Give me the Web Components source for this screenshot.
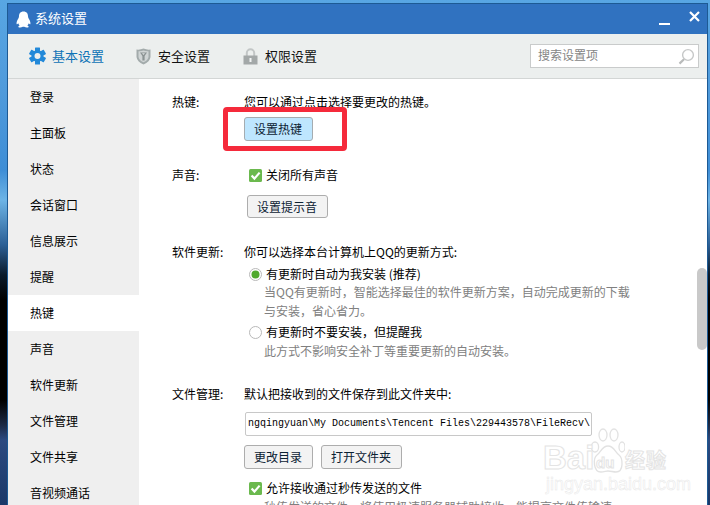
<!DOCTYPE html>
<html lang="zh">
<head>
<meta charset="utf-8">
<title>系统设置</title>
<style>
  html, body { margin: 0; height: 100%; overflow: hidden; }
  body { font: 12px/18px "Noto Sans CJK SC", "Liberation Sans", sans-serif; color: #000; }
</style>
</head>
<body>
<qq-desktop>
  <qq-window>
    <qq-titlebar slot="title">系统设置</qq-titlebar>
    <qq-toolbar slot="toolbar">
      <qq-tab icon="gear" active>基本设置</qq-tab>
      <qq-tab icon="shield">安全设置</qq-tab>
      <qq-tab icon="lock">权限设置</qq-tab>
      <qq-search slot="search">搜索设置项</qq-search>
    </qq-toolbar>
    <qq-sidebar slot="side">
      <qq-nav>登录</qq-nav>
      <qq-nav>主面板</qq-nav>
      <qq-nav>状态</qq-nav>
      <qq-nav>会话窗口</qq-nav>
      <qq-nav>信息展示</qq-nav>
      <qq-nav>提醒</qq-nav>
      <qq-nav active>热键</qq-nav>
      <qq-nav>声音</qq-nav>
      <qq-nav>软件更新</qq-nav>
      <qq-nav>文件管理</qq-nav>
      <qq-nav>文件共享</qq-nav>
      <qq-nav>音视频通话</qq-nav>
    </qq-sidebar>
    <qq-content slot="main">
      <qq-section label="热键:">
        <div>您可以通过点击选择要更改的热键。</div>
        <qq-button primary style="margin-top:6px">设置热键</qq-button>
      </qq-section>
      <qq-section label="声音:">
        <qq-option type="check" checked>关闭所有声音</qq-option>
        <qq-button style="margin:11px 0 0 3px;height:23px;line-height:21px">设置提示音</qq-button>
      </qq-section>
      <qq-section label="软件更新:">
        <div>你可以选择本台计算机上QQ的更新方式:</div>
        <qq-option type="radio" checked style="margin-top:4px">有更新时自动为我安装 (推荐)</qq-option>
        <qq-note style="margin-top:-1px">当QQ有更新时，智能选择最佳的软件更新方案，自动完成更新的下载<br>与安装，省心省力。</qq-note>
        <qq-option type="radio" style="margin-top:3px">有更新时不要安装，但提醒我</qq-option>
        <qq-note>此方式不影响安全补丁等重要更新的自动安装。</qq-note>
      </qq-section>
      <qq-section label="文件管理:">
        <div>默认把接收到的文件保存到此文件夹中:</div>
        <qq-path style="margin-top:9px">ngqingyuan\My Documents\Tencent Files\229443578\FileRecv\</qq-path>
        <qq-actions style="margin-top:9px">
          <qq-button>更改目录</qq-button>
          <qq-button>打开文件夹</qq-button>
        </qq-actions>
        <qq-option type="check" checked style="margin-top:10px">允许接收通过秒传发送的文件</qq-option>
        <qq-note>秒传发送的文件，将使用极速服务器辅助接收，能提高文件传输速</qq-note>
      </qq-section>
      <qq-highlight></qq-highlight>
      <qq-watermark></qq-watermark>
      <qq-scrollbar></qq-scrollbar>
    </qq-content>
  </qq-window>
</qq-desktop>

<script>
  // small helper, every element below is just a class with a shadow root
  const define = (name, css, html) => {
    class El extends HTMLElement {
      constructor() {
        super();
        this.attachShadow({ mode: "open" });
      }
      connectedCallback() {
        const body = typeof html === "function" ? html(this) : html;
        this.shadowRoot.innerHTML = `<style>${css}</style>${body}`;
      }
    }
    customElements.define(name, El);
  };

  const ICONS = {
    gear: `<svg width="17" height="18" viewBox="0 0 17 18">
      <g fill="#2289d9">
        <rect x="6" y="0.5" width="5" height="17" rx="0.5"/>
        <rect x="6" y="0.5" width="5" height="17" rx="0.5" transform="rotate(60 8.5 9)"/>
        <rect x="6" y="0.5" width="5" height="17" rx="0.5" transform="rotate(120 8.5 9)"/>
      </g>
      <circle cx="8.5" cy="9" r="4.6" fill="none" stroke="#2289d9" stroke-width="2.6"/>
      <circle cx="8.5" cy="9" r="3" fill="#ecefee"/>
    </svg>`,
    shield: `<svg width="15" height="17" viewBox="0 0 15 17">
      <path d="M0.5 1.5 Q4 2 7.5 0.5 Q11 2 14.5 1.5 V9 Q14 13.5 7.5 16.5 Q1 13.5 0.5 9 Z" fill="#a3abab"/>
      <path d="M2.5 3.3 Q5 3.5 7.5 2.6 Q10 3.5 12.5 3.3 V9 Q12 12.3 7.5 14.3 Q3 12.3 2.5 9 Z" fill="#d0d5d5"/>
      <path d="M4 4.5 H11 L8.6 8 V12.6 H6.4 V8 Z" fill="#8b9393"/>
      <path d="M6 5.3 H9 L7.5 7 Z" fill="#dde1e1"/>
    </svg>`,
    lock: `<svg width="15" height="17" viewBox="0 0 15 17">
      <path d="M3.8 8 V5 A3.7 3.7 0 0 1 11.2 5 V8" fill="none" stroke="#c2c6c6" stroke-width="2"/>
      <rect x="0.5" y="7.5" width="14" height="9" fill="#a3a8a8"/>
      <rect x="6.5" y="10" width="2" height="4" fill="#f2f4f4"/>
    </svg>`,
  };

  define("qq-desktop", `
    :host {
      display: block; box-sizing: border-box; width: 710px; height: 505px; overflow: hidden;
      padding: 3px 2px 0 7px;
      background: linear-gradient(#58a6e3 0, #4f9adb 90px, #3f8ed6 170px, #6db4e6 200px, #2c5f95 245px,
        #0a1a2a 275px, #000 300px, #000 400px, #1c2a45 425px, #2c4a80 440px, #1a3868 505px);
    }`, `<slot></slot>`);

  define("qq-window", `
    :host {
      display: grid; grid-template-columns: 131px 1fr; grid-template-rows: 30px 45px 1fr;
      height: 100%; box-sizing: border-box; background: #fff;
      border: solid #1d5a94; border-width: 1px 1px 0 1px;
    }
    ::slotted([slot=title]), ::slotted([slot=toolbar]) { grid-column: 1 / 3; }`,
    `<slot name="title"></slot><slot name="toolbar"></slot><slot name="side"></slot><slot name="main"></slot>`);

  define("qq-titlebar", `
    :host {
      display: flex; align-items: center; gap: 4px; padding: 0 7px 0 8px;
      background: #3072c0; color: #fff; font-size: 13px;
    }
    svg { display: block; flex: none; }
    .name { flex: 1; margin-top: -2px; }
    .btns { display: flex; align-items: flex-start; gap: 19px; height: 18px; }
    .min { width: 11px; height: 2px; background: #fff; margin-top: 13px; }`, `
    <svg width="15" height="17" viewBox="0 0 15 17">
      <path fill="#fff" d="M7.5 0.5 C4.3 0.5 3 2.7 3 5.2 C3 6.2 2.7 6.8 2.2 7.7 C1.1 9.5 0.3 11.2 0.6 13 C0.8 13.8 1.6 13.2 2.2 12.2 C2.5 13.2 3 13.9 3.7 14.5 C2.6 14.9 2.2 15.4 2.4 15.9 C2.8 16.7 5.4 16.7 6.8 15.8 H8.2 C9.6 16.7 12.2 16.7 12.6 15.9 C12.8 15.4 12.4 14.9 11.3 14.5 C12 13.9 12.5 13.2 12.8 12.2 C13.4 13.2 14.2 13.8 14.4 13 C14.7 11.2 13.9 9.5 12.8 7.7 C12.3 6.8 12 6.2 12 5.2 C12 2.7 10.7 0.5 7.5 0.5 Z"/>
    </svg>
    <span class="name"><slot></slot></span>
    <span class="btns">
      <span class="min"></span>
      <svg width="11" height="11" viewBox="0 0 11 11" style="margin-top:1px"><path d="M1 1 L10 10 M10 1 L1 10" stroke="#fff" stroke-width="2.2"/></svg>
    </span>`);

  define("qq-toolbar", `
    :host {
      display: flex; align-items: center; padding: 0 8px 0 21px;
      background: #ecefee; border-bottom: 1px solid #d3d6d5;
    }
    .tabs { display: flex; flex: 1; gap: 26px; }`,
    `<div class="tabs"><slot></slot></div><slot name="search"></slot>`);

  define("qq-tab", `
    :host {
      display: flex; align-items: center; width: 81px; gap: 7px;
      font-size: 13px; color: #111;
    }
    :host([active]) { color: #0d72b6; gap: 6px; width: 81px; }
    svg { display: block; flex: none; }`,
    (el) => `${ICONS[el.getAttribute("icon")]}<span><slot></slot></span>`);

  define("qq-search", `
    :host {
      display: flex; align-items: center; justify-content: space-between; box-sizing: border-box;
      width: 169px; height: 24px; padding: 0 3px 0 7px;
      background: #fff; border: 1px solid #c9cbcb; color: #858585;
    }
    svg { display: block; margin-top: 1px; }
    span { margin-top: -2px; }`, `
    <span><slot></slot></span>
    <svg width="17" height="17" viewBox="0 0 17 17">
      <circle cx="10" cy="7" r="5.4" fill="none" stroke="#c6c8c8" stroke-width="1.4"/>
      <path d="M6 11.2 L1.5 15.6" stroke="#b9bbbb" stroke-width="2.2"/>
    </svg>`);

  define("qq-sidebar", `
    :host { display: block; background: #efefef; overflow: hidden; }`, `<slot></slot>`);

  define("qq-nav", `
    :host { display: block; height: 36px; line-height: 36px; padding-left: 22px; }
    :host([active]) { background: #fff; }`, `<slot></slot>`);

  define("qq-content", `
    :host {
      display: block; position: relative; overflow: hidden; background: #fff;
      padding: 14px 0 0 33px;
    }`, `<slot></slot>`);

  define("qq-section", `
    :host { display: grid; grid-template-columns: 72px 1fr; margin-bottom: 25px; }`,
    (el) => `<div>${el.getAttribute("label")}</div><div><slot></slot></div>`);

  define("qq-button", `
    :host {
      display: inline-block; box-sizing: border-box; height: 24px; line-height: 22px; padding: 0 10px 0 9px;
      background: #f3f3f3; border: 1px solid #adadad; border-radius: 3px; color: #0c2233; vertical-align: top;
    }
    :host([primary]) { background: #bee6fe; border-color: #a5acb0; }`, `<slot></slot>`);

  define("qq-actions", `
    :host { display: flex; gap: 8px; }`, `<slot></slot>`);

  define("qq-option", `
    :host { display: flex; align-items: center; gap: 4px; height: 18px; padding-left: 5px; }
    svg { display: block; flex: none; }`,
    (el) => {
      const on = el.hasAttribute("checked");
      const mark = el.getAttribute("type") === "check"
        ? `<svg width="13" height="13" viewBox="0 0 13 13"><rect width="13" height="13" rx="1.5" fill="#6bb94e"/><path d="M2.6 6.6 L5.4 9.6 L10.6 3.6" fill="none" stroke="#fff" stroke-width="2.2"/></svg>`
        : `<svg width="13" height="13" viewBox="0 0 13 13"><circle cx="6.5" cy="6.5" r="6" fill="#fff" stroke="#b8b8b8"/>${on ? '<circle cx="6.5" cy="6.5" r="4" fill="#4fa92c"/>' : ""}</svg>`;
      return `${mark}<span><slot></slot></span>`;
    });

  define("qq-note", `
    :host { display: block; padding-left: 20px; color: #808080; line-height: 19px; }`, `<slot></slot>`);

  define("qq-path", `
    :host {
      display: block; box-sizing: border-box; width: 347px; height: 24px; margin-left: 1px;
      padding-left: 2px; line-height: 22px; white-space: nowrap; overflow: hidden;
      border: 1px solid #c8c8c8; border-radius: 2px;
      font: 10px/22px "Liberation Mono", monospace; color: #000;
    }`, `<slot></slot>`);

  // things that sit on top of the content
  define("qq-highlight", `
    :host {
      position: absolute; left: 84px; top: 28px; width: 124px; height: 44px; box-sizing: border-box;
      border: 5px solid #f52a3b; border-radius: 4px;
    }`, ``);

  define("qq-scrollbar", `
    :host {
      position: absolute; right: 0; top: 189px; width: 10px; height: 82px;
      background: #c9c9c9; border-radius: 5px;
    }`, ``);

  define("qq-watermark", `
    :host {
      position: absolute; left: 404px; top: 347px; width: 130px; height: 66px; color: #fff;
      font-family: "Liberation Sans", sans-serif;
    }
    svg { position: absolute; left: 48px; top: 0; }
    span { position: absolute; white-space: nowrap; -webkit-text-stroke: 1px #e4e4e4; }
    .bai { left: 0; top: 17px; font: bold 33px/30px "Liberation Sans", sans-serif; }
    .du { left: 53px; top: 29px; font: bold 15px/16px "Liberation Sans", sans-serif; }
    .jy { left: 82px; top: 22px; font: bold 20px/24px "Noto Sans CJK SC", sans-serif; letter-spacing: 1px; }
    .url { left: 3px; top: 50px; font: 18px/16px "Liberation Sans", sans-serif; -webkit-text-stroke: 0.5px #e8e8e8; }`, `
    <svg width="34" height="47" viewBox="0 0 34 47" fill="#fff" stroke="#e2e2e2" stroke-width="1.3">
      <ellipse cx="4" cy="21" rx="3.6" ry="5"/>
      <ellipse cx="12" cy="9" rx="4" ry="6"/>
      <ellipse cx="23" cy="9" rx="4" ry="6"/>
      <ellipse cx="31" cy="21" rx="3" ry="5"/>
      <path d="M17 20 C11 20 10 26 6 29 C2 32 2 46 10 46 C13 46 15 45 17 45 C20 45 22 46 25 46 C33 46 32 32 28 29 C24 26 23 20 17 20 Z"/>
    </svg>
    <span class="bai">Bai</span><span class="du">du</span><span class="jy">经验</span><span class="url">jingyan.baidu.com</span>`);
</script>
</body>
</html>
